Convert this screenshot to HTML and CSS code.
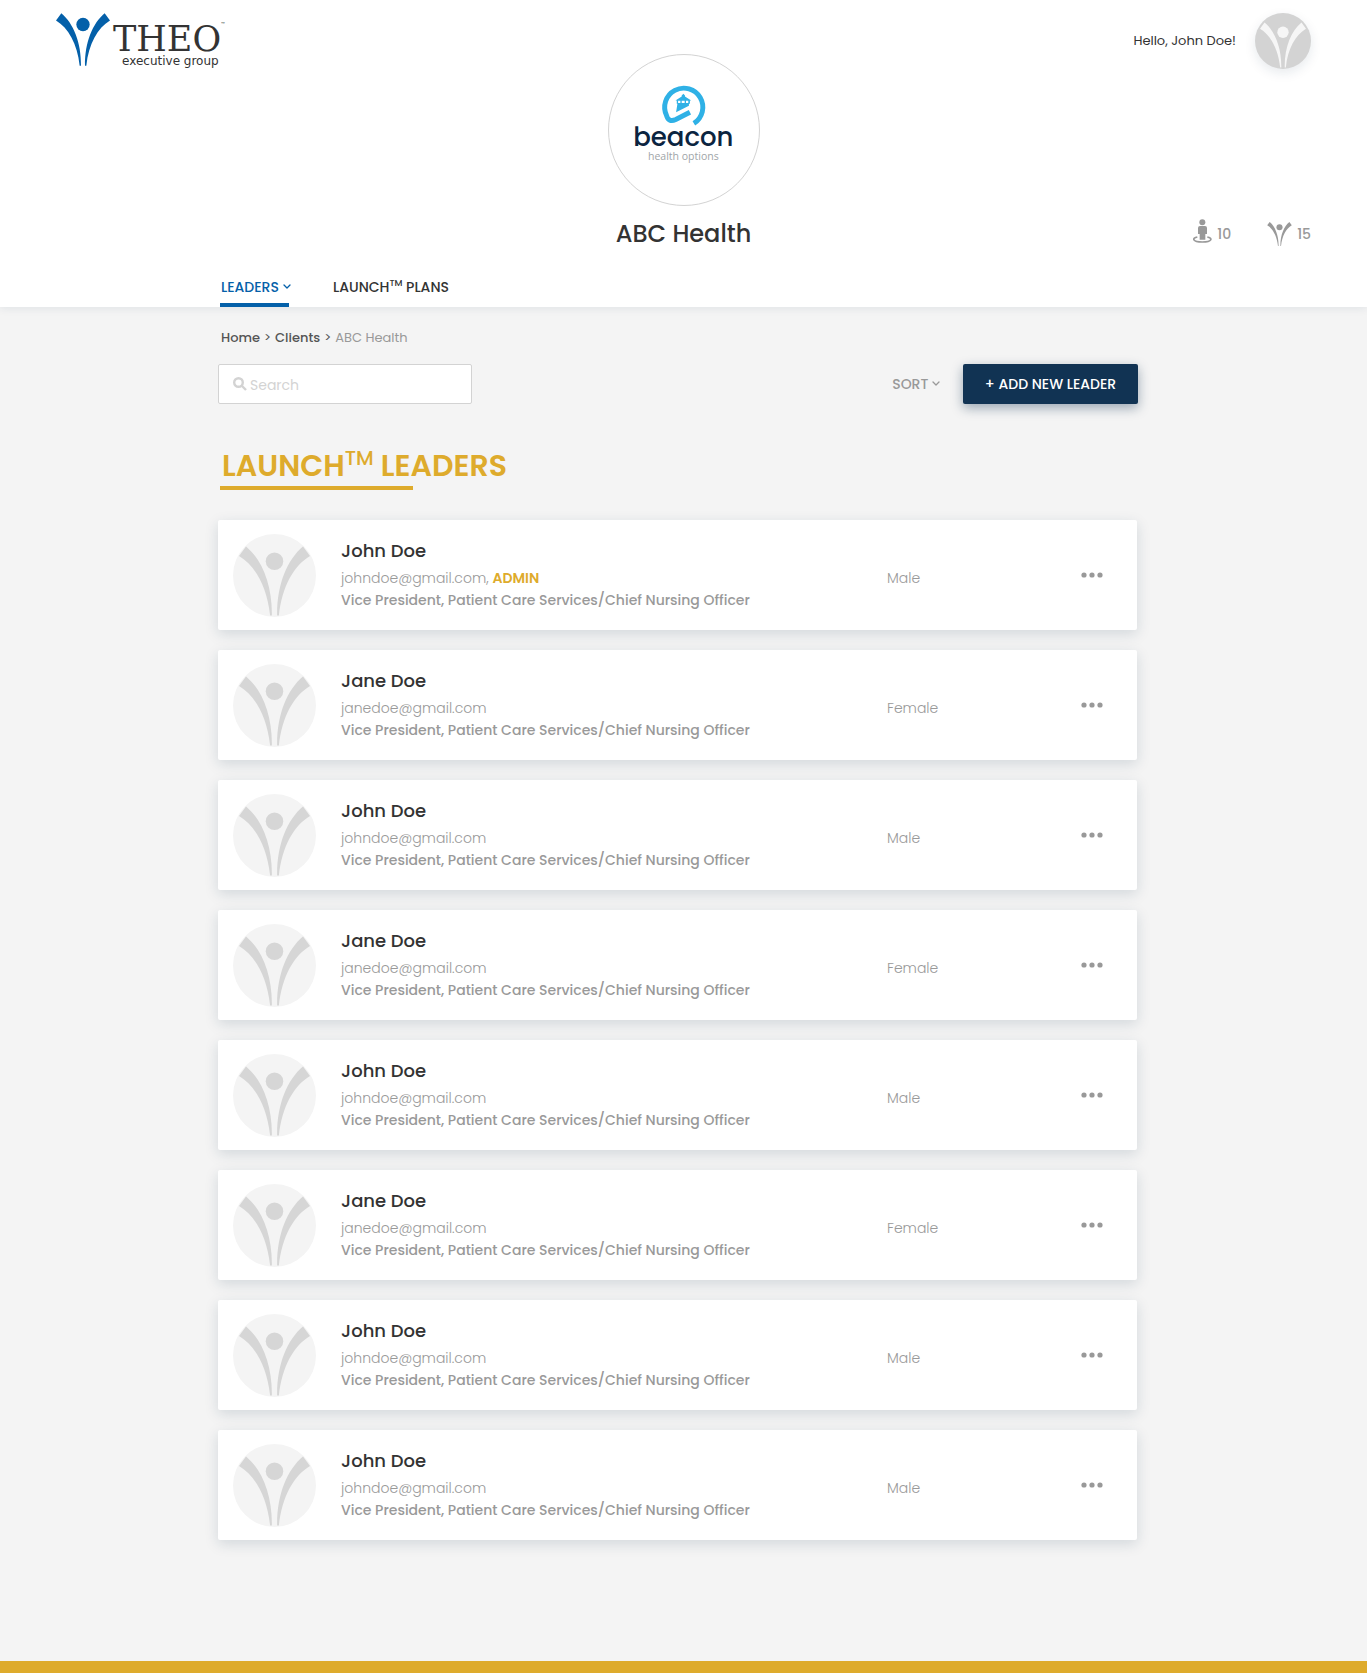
FILE: index.html
```html
<!DOCTYPE html>
<html lang="en">
<head>
<meta charset="utf-8">
<meta name="viewport" content="width=device-width, initial-scale=1">
<title>ABC Health – Leaders</title>
<link rel="stylesheet" href="styles.css">
</head>
<body>
<svg class="sprite" aria-hidden="true">
  <symbol id="figure" viewBox="48 38 162 158">
    <path d="M64 38 48 60C85 82 112 130 119 196H123C124 125 100 68 64 38ZM194 38 210 60C173 82 146 130 139 196H135C134 125 158 68 194 38Z"/>
    <circle cx="129" cy="72" r="20"/>
  </symbol>
  <symbol id="chevron" viewBox="0 0 8 6">
    <path d="M1 1 4 4 7 1" fill="none" stroke="currentColor" stroke-width="1.3" stroke-linecap="round" stroke-linejoin="round"/>
  </symbol>
  <symbol id="dots" viewBox="0 0 22 6">
    <circle cx="3" cy="3" r="2.6"/><circle cx="11" cy="3" r="2.6"/><circle cx="19" cy="3" r="2.6"/>
  </symbol>
</svg>

<header class="header">
  <div class="masthead">
    <a class="brand" href="#" aria-label="THEO executive group">
      <svg width="172" height="58" viewBox="0 0 172 58">
        <use class="brand-figure" href="#figure" x="0" y="0" width="54" height="53"/>
        <text class="brand-name" x="57" y="38">THEO</text>
        <text class="brand-tm" x="165" y="14">™</text>
        <text class="brand-sub" x="66" y="52">executive group</text>
      </svg>
    </a>
    <div class="client">
      <svg class="client-logo" viewBox="55 42 456 456" role="img" aria-label="beacon health options">
        <path d="M313 250A58 58 0 1 0 230 226Q236 248 258 238L301 216" fill="none" stroke="#2fb1e6" stroke-width="15"/>
        <path d="M257 180 276 168V165L281 160 286 165V168L305 180H301V190H298V196L259 216 263 190H261V180Z" fill="#2fb1e6"/>
        <path d="M265 181h7v7h-7zM276 181h9v7h-9zM289 181h7v7h-7z" fill="#fff"/>
        <text class="beacon-name" x="281" y="320">beacon</text>
        <text class="beacon-sub" x="281" y="361">health options</text>
      </svg>
      <h1 class="client-name">ABC Health</h1>
    </div>
    <div class="aside">
      <div class="user">
        <span>Hello, John Doe!</span>
        <span class="avatar avatar-user"><svg><use href="#figure"/></svg></span>
      </div>
      <div class="stats">
        <span class="stat">
          <svg class="person" width="19" height="24" viewBox="69 55 57 72">
            <circle cx="97" cy="65" r="9"/>
            <path d="M90 76h15q6 0 6 6v18h-5v17H89v-17h-5V82q0-6 6-6z"/>
            <path d="M82 109C66 112 66 124 97 124S128 112 112 109" fill="none" stroke="#999" stroke-width="5"/>
          </svg>10</span>
        <span class="stat"><svg width="25" height="24"><use href="#figure"/></svg>15</span>
      </div>
    </div>
  </div>
  <nav class="tabs wrap" aria-label="Client">
    <a class="tab tab-active" href="#">LEADERS <svg class="chevron"><use href="#chevron"/></svg></a>
    <a class="tab" href="#">LAUNCH<sup>TM</sup> PLANS</a>
  </nav>
</header>

<main class="wrap">
  <nav class="crumbs" aria-label="Breadcrumb">
    <a href="#">Home</a><span>&gt;</span><a href="#">Clients</a><span>&gt;</span><span class="crumb-here">ABC Health</span>
  </nav>
  <div class="toolbar">
    <label class="search">
      <svg width="14" height="14" viewBox="0 0 14 14"><circle cx="5.5" cy="5.5" r="4.3"/><path d="M9 9l4 4"/></svg>
      <input type="search" placeholder="Search" aria-label="Search">
    </label>
    <button class="sort" type="button">SORT <svg class="chevron"><use href="#chevron"/></svg></button>
    <button class="add" type="button">+ ADD NEW LEADER</button>
  </div>
  <h2 class="title">LAUNCH<sup>TM</sup> LEADERS</h2>
  <ul class="leaders">
    <li class="card">
      <span class="avatar"><svg><use href="#figure"/></svg></span>
      <div class="who"><h3>John Doe</h3><p class="mail">johndoe@gmail.com, <b>ADMIN</b></p><p class="role">Vice President, Patient Care Services/Chief Nursing Officer</p></div>
      <span class="gender">Male</span>
      <button class="more" type="button" aria-label="More actions"><svg><use href="#dots"/></svg></button>
    </li>
    <li class="card">
      <span class="avatar"><svg><use href="#figure"/></svg></span>
      <div class="who"><h3>Jane Doe</h3><p class="mail">janedoe@gmail.com</p><p class="role">Vice President, Patient Care Services/Chief Nursing Officer</p></div>
      <span class="gender">Female</span>
      <button class="more" type="button" aria-label="More actions"><svg><use href="#dots"/></svg></button>
    </li>
    <li class="card">
      <span class="avatar"><svg><use href="#figure"/></svg></span>
      <div class="who"><h3>John Doe</h3><p class="mail">johndoe@gmail.com</p><p class="role">Vice President, Patient Care Services/Chief Nursing Officer</p></div>
      <span class="gender">Male</span>
      <button class="more" type="button" aria-label="More actions"><svg><use href="#dots"/></svg></button>
    </li>
    <li class="card">
      <span class="avatar"><svg><use href="#figure"/></svg></span>
      <div class="who"><h3>Jane Doe</h3><p class="mail">janedoe@gmail.com</p><p class="role">Vice President, Patient Care Services/Chief Nursing Officer</p></div>
      <span class="gender">Female</span>
      <button class="more" type="button" aria-label="More actions"><svg><use href="#dots"/></svg></button>
    </li>
    <li class="card">
      <span class="avatar"><svg><use href="#figure"/></svg></span>
      <div class="who"><h3>John Doe</h3><p class="mail">johndoe@gmail.com</p><p class="role">Vice President, Patient Care Services/Chief Nursing Officer</p></div>
      <span class="gender">Male</span>
      <button class="more" type="button" aria-label="More actions"><svg><use href="#dots"/></svg></button>
    </li>
    <li class="card">
      <span class="avatar"><svg><use href="#figure"/></svg></span>
      <div class="who"><h3>Jane Doe</h3><p class="mail">janedoe@gmail.com</p><p class="role">Vice President, Patient Care Services/Chief Nursing Officer</p></div>
      <span class="gender">Female</span>
      <button class="more" type="button" aria-label="More actions"><svg><use href="#dots"/></svg></button>
    </li>
    <li class="card">
      <span class="avatar"><svg><use href="#figure"/></svg></span>
      <div class="who"><h3>John Doe</h3><p class="mail">johndoe@gmail.com</p><p class="role">Vice President, Patient Care Services/Chief Nursing Officer</p></div>
      <span class="gender">Male</span>
      <button class="more" type="button" aria-label="More actions"><svg><use href="#dots"/></svg></button>
    </li>
    <li class="card">
      <span class="avatar"><svg><use href="#figure"/></svg></span>
      <div class="who"><h3>John Doe</h3><p class="mail">johndoe@gmail.com</p><p class="role">Vice President, Patient Care Services/Chief Nursing Officer</p></div>
      <span class="gender">Male</span>
      <button class="more" type="button" aria-label="More actions"><svg><use href="#dots"/></svg></button>
    </li>
  </ul>
</main>
<footer class="footer"></footer>
</body>
</html>
```
FILE: styles.css
```css
* { box-sizing: border-box; }

body {
  margin: 0;
  min-height: 100vh;
  display: flex;
  flex-direction: column;
  background: #f4f4f4;
  color: #333;
  font: 400 14px/20px Poppins, Inter, sans-serif;
}

h1, h2, h3, p, ul { margin: 0; padding: 0; }
a { color: inherit; text-decoration: none; }
button { padding: 0; border: 0; background: none; font: inherit; cursor: pointer; }
svg { display: block; fill: currentColor; }
sup { line-height: 0; }

.sprite { position: absolute; width: 0; height: 0; }

.wrap {
  width: 100%;
  max-width: 931px;
  margin: 0 auto;
  padding-right: 11px;
}

/* Header */
.header {
  background: #fff;
  box-shadow: 0 2px 8px rgba(17, 51, 83, .08);
}

.masthead {
  display: grid;
  grid-template-columns: 1fr auto 1fr;
  padding: 13px 56px 0;
}

.brand { justify-self: start; align-self: start; }
.brand-figure { fill: #0460a9; }
.brand-name { font: 400 35px "DejaVu Serif", serif; }
.brand-tm { font: 400 6px Inter, sans-serif; }
.brand-sub { font: 400 12px "DejaVu Sans", sans-serif; }

.client {
  display: flex;
  flex-direction: column;
  align-items: center;
  gap: 10px;
  padding-top: 41px;
}

.client-logo {
  width: 152px;
  height: 152px;
  border: 1px solid #d3d3d3;
  border-radius: 50%;
}

.client-name { font-size: 24px; font-weight: 500; line-height: 36px; }
.beacon-name { font: 500 79px Poppins, Inter, sans-serif; fill: #0b2440; text-anchor: middle; }
.beacon-sub { font: 400 32px "Open Sans", sans-serif; fill: #a0a5a8; text-anchor: middle; }

.aside {
  display: flex;
  flex-direction: column;
  justify-content: space-between;
  align-items: flex-end;
}

.user { display: flex; align-items: center; gap: 19px; font-size: 13px; }

.avatar {
  display: block;
  width: 83px;
  height: 83px;
  padding: 12px 6px 0;
  border-radius: 50%;
  overflow: hidden;
  background: #f4f4f4;
  color: #d6d6d6;
}

.avatar svg { width: 100%; height: 70px; }

.avatar-user {
  width: 56px;
  height: 56px;
  padding: 9px 5px 0;
  background: #d3d3d3;
  color: #f6f6f6;
  box-shadow: 0 4px 12px rgba(17, 51, 83, .1);
}

.avatar-user svg { height: 46px; }

.stats { display: flex; gap: 36px; padding-bottom: 3px; color: #999; font-weight: 500; }
.stat { display: flex; align-items: center; gap: 5px; }
.person { margin-bottom: 6px; }

.tabs { display: flex; gap: 43px; padding-top: 15px; padding-left: 2px; }

.tab {
  height: 40px;
  padding: 10px 0 0 1px;
  font-weight: 500;
  white-space: nowrap;
}

.tab sup { font-size: 9px; }
.tab-active { width: 69px; border-bottom: 4px solid #0460a9; color: #0460a9; }
.chevron { display: inline-block; width: 8px; height: 6px; vertical-align: 2px; }

/* Toolbar */
.crumbs {
  display: flex;
  gap: 4px;
  padding: 21px 3px 16px;
  color: #555;
  font-size: 13px;
}

.crumbs a { font-weight: 500; }
.crumbs .crumb-here { color: #999; }

.toolbar { display: flex; align-items: center; }

.search {
  display: flex;
  align-items: center;
  gap: 3px;
  width: 254px;
  height: 40px;
  margin-right: auto;
  padding: 0 14px;
  border: 1px solid #d3d3d3;
  border-radius: 2px;
  background: #fff;
  color: #d3d3d3;
}

.search svg { flex: none; fill: none; stroke: #d3d3d3; stroke-width: 2.4; }

.search input {
  flex: 1;
  min-width: 0;
  padding: 2px 0 0;
  border: 0;
  outline: 0;
  background: none;
  color: #333;
  font: inherit;
}

.search input::placeholder { color: #d3d3d3; }

.sort { margin-right: 23px; color: #999; font-weight: 500; }

.add {
  width: 175px;
  height: 40px;
  border-radius: 2px;
  background: #113353;
  box-shadow: 0 4px 12px rgba(17, 51, 83, .4);
  color: #fff;
  font-weight: 500;
}

/* Leaders */
.title {
  margin: 42px 0 30px 2px;
  padding-left: 2px;
  color: #deab2c;
  font-size: 30px;
  font-weight: 600;
  line-height: 40px;
}

.title::after {
  content: "";
  display: block;
  width: 193px;
  height: 4px;
  margin-left: -2px;
  background: #deab2c;
}

.title sup { font-size: 20px; font-weight: 500; }

.leaders { display: grid; gap: 20px; margin-right: 1px; list-style: none; }

.card {
  display: grid;
  grid-template-columns: 83px 1fr 194px 22px;
  align-items: center;
  height: 110px;
  padding: 0 34px 0 15px;
  border-radius: 2px;
  background: #fff;
  box-shadow: 0 4px 14px rgba(17, 51, 83, .15);
  color: #999;
}

.who { padding: 0 0 2px 25px; }
.who h3 { margin-bottom: 2px; color: #333; font-size: 18px; font-weight: 500; line-height: 28px; }
.mail, .role { line-height: 22px; }
.mail, .gender { font-weight: 300; }
.mail b { color: #deab2c; font-weight: 600; }
.role { font-weight: 500; }
.gender { padding-top: 6px; }
.more { color: #999; }
.more svg { width: 22px; height: 6px; }

.footer { height: 12px; margin-top: auto; background: #deab2c; }
```
